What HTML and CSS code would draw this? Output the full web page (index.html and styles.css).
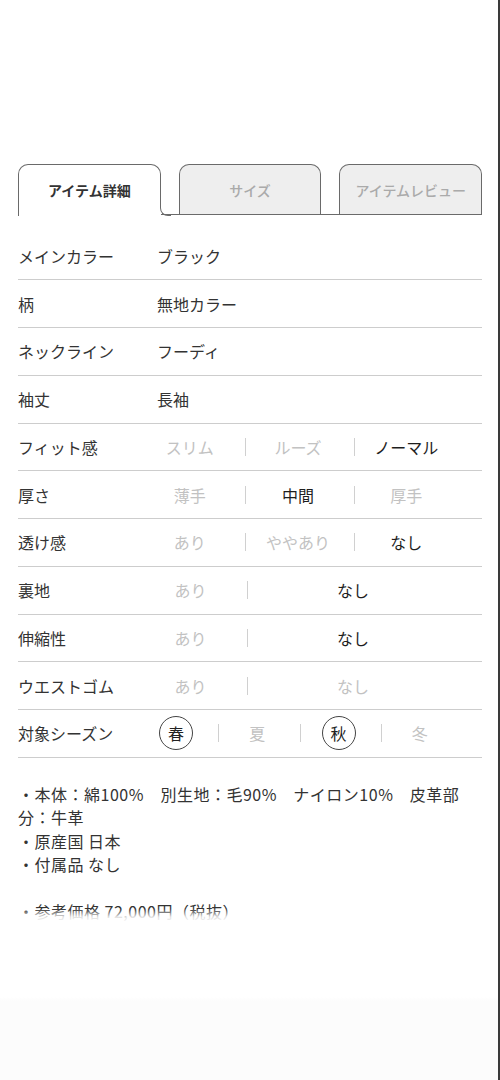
FILE: index.html
```html
<!DOCTYPE html>
<html lang="ja">
<head>
<meta charset="utf-8">
<title>アイテム詳細</title>
<link rel="stylesheet" href="styles.css">
</head>
<body>
<div class="page">
  <div class="content">
    <div class="tabs">
      <div class="tab active">アイテム詳細</div>
      <div class="tab">サイズ</div>
      <div class="tab">アイテムレビュー</div>
    </div>

    <div class="spec">
      <div class="row plain"><div class="label">メインカラー</div><div class="value">ブラック</div></div>
      <div class="row plain"><div class="label">柄</div><div class="value">無地カラー</div></div>
      <div class="row plain"><div class="label">ネックライン</div><div class="value">フーディ</div></div>
      <div class="row plain"><div class="label">袖丈</div><div class="value">長袖</div></div>

      <div class="row choice"><div class="label">フィット感</div>
        <div class="opts"><span class="opt">スリム</span><span class="sep"></span><span class="opt">ルーズ</span><span class="sep"></span><span class="opt on">ノーマル</span></div>
      </div>
      <div class="row choice"><div class="label">厚さ</div>
        <div class="opts"><span class="opt">薄手</span><span class="sep"></span><span class="opt on">中間</span><span class="sep"></span><span class="opt">厚手</span></div>
      </div>
      <div class="row choice"><div class="label">透け感</div>
        <div class="opts"><span class="opt">あり</span><span class="sep"></span><span class="opt">ややあり</span><span class="sep"></span><span class="opt on">なし</span></div>
      </div>
      <div class="row choice"><div class="label">裏地</div>
        <div class="opts"><span class="opt">あり</span><span class="sep"></span><span class="opt wide on">なし</span></div>
      </div>
      <div class="row choice"><div class="label">伸縮性</div>
        <div class="opts"><span class="opt">あり</span><span class="sep"></span><span class="opt wide on">なし</span></div>
      </div>
      <div class="row choice"><div class="label">ウエストゴム</div>
        <div class="opts"><span class="opt">あり</span><span class="sep"></span><span class="opt wide">なし</span></div>
      </div>
      <div class="row choice"><div class="label">対象シーズン</div>
        <div class="opts season"><span class="opt"><span class="circle">春</span></span><span class="sep"></span><span class="opt">夏</span><span class="sep"></span><span class="opt"><span class="circle">秋</span></span><span class="sep"></span><span class="opt">冬</span></div>
      </div>
    </div>

    <p class="desc">・本体：綿100%　別生地：毛90%　ナイロン10%　皮革部分：牛革<br>・原産国 日本<br>・付属品 なし<br><br>・参考価格 72,000円（税抜）</p>
  </div>
  <div class="fade"></div>
</div>
</body>
</html>
```

FILE: styles.css
```css
html, body {
  margin: 0;
  padding: 0;
  background: #fff;
}

body {
  font-family: "Noto Sans CJK JP", "Noto Sans", sans-serif;
  color: #333;
}

.page {
  position: relative;
  width: 498px;
  min-height: 1080px;
  border-right: 2px solid #3a3a3a;
  overflow: hidden;
}

.content {
  padding: 164px 18px 0;
}

/* tabs */
.tabs {
  display: flex;
  gap: 18px;
  height: 50px;
  margin-right: -2px;
  border-bottom: 1.5px solid #6a6a6a;
}

.tab {
  flex: 1;
  display: flex;
  align-items: center;
  justify-content: center;
  border: 1.5px solid #6a6a6a;
  border-bottom: 0;
  border-radius: 10px 10px 0 0;
  background: #eeeeee;
  color: #aaa;
  font-size: 14px;
  font-weight: 500;
}

.tab.active {
  position: relative;
  background: #fff;
  color: #333;
  font-weight: 700;
  margin-bottom: -1.5px;
}

.tab.active::before {
  content: "";
  position: absolute;
  right: -1.5px;
  bottom: 0;
  width: 2px;
  height: 10px;
  background: #fff;
}

.tab.active::after {
  content: "";
  position: absolute;
  left: 100%;
  bottom: 0;
  width: 10px;
  height: 9px;
  border-left: 1.5px solid #6a6a6a;
  border-bottom: 1.5px solid #6a6a6a;
  border-bottom-left-radius: 8px;
}

/* spec table */
.spec {
  margin-top: 17.5px;
  margin-right: -2px;
}

.row {
  display: grid;
  align-items: center;
  height: 47.75px;
  box-sizing: border-box;
  border-bottom: 1px solid #cdcdcd;
  font-size: 16px;
}

.row.plain {
  grid-template-columns: 139px 1fr;
}

.row.choice {
  grid-template-columns: 120px 324px;
}

.label {
  color: #333;
}

.value {
  color: #333;
}

.opts {
  display: flex;
  align-items: center;
}

.opt {
  flex: 1;
  display: flex;
  justify-content: center;
  padding-right: 4px;
  color: #c2c2c2;
}

.opt.wide {
  flex: 2;
}

.opt.on {
  color: #1e1e1e;
}

.sep {
  width: 1px;
  height: 18px;
  background: #d0d0d0;
}

.circle {
  display: flex;
  align-items: center;
  justify-content: center;
  width: 32px;
  height: 32px;
  border: 1.5px solid #444;
  border-radius: 50%;
  color: #222;
}

/* description */
.desc {
  margin: 25px 18px 0 0;
  font-size: 16px;
  letter-spacing: 0.5px;
  line-height: 23.4px;
  color: #333;
}

.fade {
  position: absolute;
  left: 0;
  right: 0;
  top: 909px;
  bottom: 0;
  background: linear-gradient(to bottom, rgba(255,255,255,0) 0, rgba(255,255,255,0.85) 8px, #fff 16px, #fff 88px, #fcfcfc 92px, #fcfcfc 100%);
}
```
